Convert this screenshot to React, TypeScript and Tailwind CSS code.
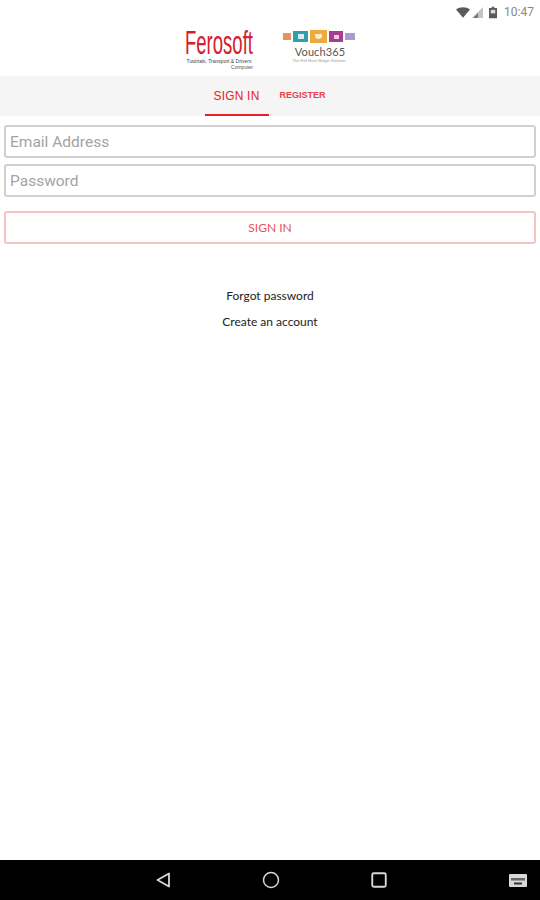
import { Circle, Square } from 'lucide-react'

function StatusBar() {
  return (
    <div className="flex h-6 items-center justify-end pr-[6px] text-[#666]">
      {/* wifi */}
      <svg width="14" height="11" viewBox="0 0 16 12" className="mr-[2px]">
        <path d="M0 2.5C4.500 -0.800 11.500 -0.800 16 2.500L8 12Z" fill="#5a5a5a" />
      </svg>
      {/* signal */}
      <svg width="11" height="11" viewBox="0 0 11 11" className="mr-[6px]">
        <path d="M11 0V11H0Z" fill="#c4c4c4" />
        <path d="M6 6V11H1Z" fill="#777" />
      </svg>
      {/* battery */}
      <svg width="8" height="13" viewBox="0 0 9 13" className="mr-[7px]">
        <path d="M3 0H6V1.500H9V13H0V1.500H3Z" fill="#5a5a5a" />
        <rect x="2" y="3.500" width="5" height="4" fill="#ddd" />
      </svg>
      <span className="font-['Roboto',sans-serif] text-[12px] leading-none text-[#888]">10:47</span>
    </div>
  )
}

function Logos() {
  return (
    <div className="flex h-[52px] items-start justify-center">
      <div className="ml-[2px] mt-[2px] flex w-[68px] flex-col">
        <span className="origin-left scale-x-[0.545] whitespace-nowrap font-['Liberation_Sans',sans-serif] text-[34px] leading-[32px] text-[#d3202f]">
          Ferosoft
        </span>
        <span className="whitespace-nowrap text-center font-['Liberation_Sans',sans-serif] text-[5px] leading-[6px] text-[#444]">
          Tutorials, Transport &amp; Drivers
        </span>
        <span className="text-right font-['Liberation_Sans',sans-serif] text-[5px] leading-[6px] text-[#555]">Computer</span>
      </div>
      <div className="ml-[28px] mt-[6px] flex w-[76px] flex-col items-center">
        <div className="flex items-center gap-[2px]">
          <div className="h-[7px] w-[8px] bg-[#e8925c]" />
          <div className="flex h-[11px] w-[15px] items-center justify-center bg-[#2f9fa8]">
            <div className="h-[5px] w-[6px] bg-[#d6eef0]" />
          </div>
          <div className="flex h-[13px] w-[17px] items-center justify-center bg-[#eeaa3c]">
            <div className="h-[5px] w-[7px] rounded-b-sm bg-[#fbeccd]" />
          </div>
          <div className="flex h-[11px] w-[14px] items-center justify-center bg-[#a83c8e]">
            <div className="h-[4px] w-[5px] bg-[#eecde6]" />
          </div>
          <div className="h-[7px] w-[10px] bg-[#a99ad0]" />
        </div>
        <span className="ml-[2px] mt-[3px] font-['Lato',sans-serif] text-[11px] leading-[12px] tracking-[0.1px] text-[#555]">Vouch365</span>
        <span className="whitespace-nowrap font-['Liberation_Sans',sans-serif] text-[4px] leading-[6px] text-[#999]">
          The Full Hotel Bulger Solution
        </span>
      </div>
    </div>
  )
}

function Tabs() {
  return (
    <div className="flex h-10 justify-center bg-[#f5f5f5] pl-[3px] font-['Liberation_Sans',sans-serif]">
      <div className="ml-[-3px] flex w-[64px] items-center justify-center border-b-2 border-[#e8202a] pt-[1px] text-[12px] font-medium tracking-[0.2px] text-[#e8202a]">
        SIGN IN
      </div>
      <div className="ml-[1px] flex w-[66px] items-center justify-center text-[9px] font-bold text-[#e8404a]">
        REGISTER
      </div>
    </div>
  )
}

export default function App() {
  return (
    <div className="flex h-[900px] w-[540px] flex-col bg-white">
      <StatusBar />
      <Logos />
      <Tabs />
      <div className="flex flex-col gap-[6px] pl-[4px] pr-[4px] pt-[9px]">
        <div className="flex h-[33px] items-center rounded-[3px] border-2 border-[#d0d0d0] pl-1 pt-[2px] font-['Roboto',sans-serif] text-[15.500px] text-[#a3a3a3]">
          Email Address
        </div>
        <div className="flex h-[33px] items-center rounded-[3px] border-2 border-[#d0d0d0] pl-1 pt-[2px] font-['Roboto',sans-serif] text-[15.500px] text-[#a3a3a3]">
          Password
        </div>
        <div className="mt-2 flex h-[33px] items-center justify-center rounded-[3px] border-2 border-[#f5c2c5] font-['Lato',sans-serif] text-[12px] text-[#e8505a]">
          SIGN IN
        </div>
      </div>
      <div className="flex flex-col items-center pt-[43px] font-['Lato',sans-serif] text-[12px] text-[#222]">
        <span className="h-[26px] leading-[18px]">Forgot password</span>
        <span className="leading-[18px]">Create an account</span>
      </div>
      <div className="mt-auto flex h-10 items-center bg-black pl-[155px] text-[#d8d8d8]">
        <svg width="16" height="16" viewBox="0 0 16 16">
          <path d="M14 1.500V14.500L2.500 8Z" fill="none" stroke="currentColor" strokeWidth="1.800" strokeLinejoin="round" />
        </svg>
        <Circle size={18} strokeWidth={2} className="ml-[91px]" />
        <Square size={18} strokeWidth={2.500} className="ml-[90px]" />
        <svg width="18" height="13" viewBox="0 0 18 13" className="ml-[121px]">
          <rect width="18" height="13" rx="1" fill="#d8d8d8" />
          <rect x="2" y="4" width="14" height="2.500" fill="#666" />
          <rect x="5" y="8.500" width="8" height="2" fill="#333" />
        </svg>
      </div>
    </div>
  )
}
